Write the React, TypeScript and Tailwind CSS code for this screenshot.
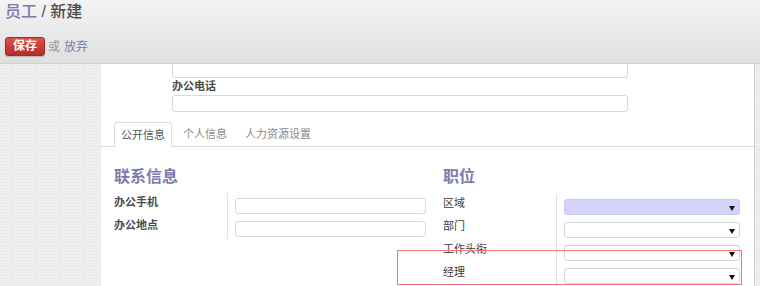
import React from "react";

const FONT = '"Liberation Sans", "Noto Sans CJK SC", sans-serif';

function Arrow() {
  return (
    <svg width="6" height="5" viewBox="0 0 6 5" className="absolute right-[4px] top-[6px]">
      <path d="M0 0 L6 0 L3 5 Z" fill="#111" />
    </svg>
  );
}

function Select({ active }: { active?: boolean }) {
  return (
    <div
      className={`relative h-[16px] w-[176px] rounded-[3px] border ${
        active ? "border-[#c8c8f0] bg-[#d4d4fb]" : "border-[#d6d6d6] bg-white"
      }`}
    >
      <Arrow />
    </div>
  );
}

function Input({ w }: { w: number }) {
  return <div className="h-[16px] rounded-[3px] border border-[#d9d9d9] bg-white" style={{ width: w }} />;
}

export default function App() {
  const texture =
    "bg-[#efefef] bg-[radial-gradient(#e0e0e0_1px,transparent_1px)] bg-[length:3px_3px]";
  return (
    <div className="relative h-[286px] w-[760px] overflow-hidden bg-white" style={{ fontFamily: FONT }}>
      {/* header */}
      <div className="h-[64px] border-b border-[#d0d0d0] bg-[linear-gradient(#f4f4f4,#dfdfdf)] px-[5px]">
        <div className="pt-[2px] text-[16px] font-medium leading-[20px]">
          <span className="text-[#7c7bad]">员工</span>
          <span className="text-[#4c4c4c]"> / 新建</span>
        </div>
        <div className="mt-[15px] flex items-center text-[12px]">
          <button className="h-[19px] w-[40px] rounded-[3px] border border-[#a02a26] bg-[linear-gradient(#dd524c,#b32c27)] text-[12px] font-bold leading-[17px] text-white shadow-[0_1px_1px_rgba(0,0,0,0.2)]">
            保存
          </button>
          <span className="ml-[3px] text-[#9a9a9a]">或</span>
          <span className="ml-[4px] text-[#7c7bad]">放弃</span>
        </div>
      </div>

      {/* body */}
      <div className="flex h-[222px]">
        <div className={`w-[101px] shrink-0 ${texture}`} />
        <div className="w-[654px] shrink-0 border-r border-[#d4d4d4] bg-white">
          {/* top fields */}
          <div className="pl-[71px]">
            <div className="h-[14px] w-[456px] rounded-b-[3px] border-x border-b border-[#d9d9d9]" />
            <div className="mt-[1px] text-[11px] font-bold leading-[14px] text-[#4c4c4c]">办公电话</div>
            <div className="mt-[2px] h-[17px] w-[456px] rounded-[3px] border border-[#d9d9d9]" />
          </div>

          {/* tabs */}
          <div className="mt-[10px] flex h-[25px] border-b border-[#dcdcdc] pl-[13px] text-[11px]">
            <div className="-mb-px flex h-[25px] items-center rounded-t-[3px] border-x border-t border-[#dcdcdc] bg-white px-[6px] text-[#555]">
              公开信息
            </div>
            <div className="ml-[4px] flex h-[24px] items-center px-[7px] text-[#8a8a8a]">个人信息</div>
            <div className="ml-[4px] flex h-[24px] items-center px-[7px] text-[#8a8a8a]">人力资源设置</div>
          </div>

          {/* content */}
          <div className="flex pl-[13px]">
            <div className="w-[312px]">
              <div className="mt-[19px] text-[16px] font-bold leading-[21px] text-[#7c7bad]">联系信息</div>
              <div className="mt-[6px]">
                {["办公手机", "办公地点"].map((l) => (
                  <div key={l} className="flex h-[23px]">
                    <div className="w-[114px] border-r border-[#e2e2e2] pt-[2px] text-[11px] font-bold leading-[14px] text-[#4c4c4c]">
                      {l}
                    </div>
                    <div className="pl-[7px] pt-[5px]">
                      <Input w={191} />
                    </div>
                  </div>
                ))}
              </div>
            </div>
            <div className="ml-[17px] w-[297px]">
              <div className="mt-[19px] text-[16px] font-bold leading-[21px] text-[#7c7bad]">职位</div>
              <div className="mt-[7px]">
                {["区域", "部门", "工作头衔", "经理"].map((l, i) => (
                  <div key={l} className="flex h-[23px]">
                    <div className="w-[114px] border-r border-[#e2e2e2] pt-[2px] text-[11px] leading-[14px] text-[#3c3c3c]">
                      {l}
                    </div>
                    <div className="pl-[7px] pt-[5px]">
                      <Select active={i === 0} />
                    </div>
                  </div>
                ))}
              </div>
            </div>
          </div>
        </div>
        <div className={`flex-1 ${texture}`} />
      </div>

      {/* red highlight box */}
      <div className="absolute left-[397px] top-[250px] h-[35px] w-[345px] border-[1.5px] border-[#f07575]" />
    </div>
  );
}
